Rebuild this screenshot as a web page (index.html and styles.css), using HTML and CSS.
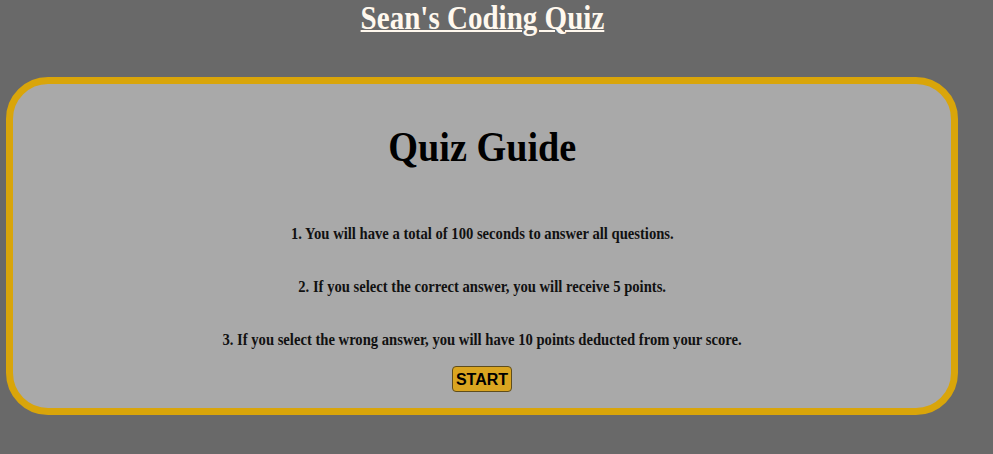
FILE: index.html
```html
<!DOCTYPE html>
<html>
<head>
<meta charset="utf-8">
<link rel="stylesheet" href="styles.css">
</head>
<body>
<div class="page">
  <header class="site-header">
    <h1 class="site-title">Sean's Coding Quiz</h1>
  </header>
  <main class="guide">
    <h2 class="guide-title">Quiz Guide</h2>
    <p class="rule">1. You will have a total of 100 seconds to answer all questions.</p>
    <p class="rule">2. If you select the correct answer, you will receive 5 points.</p>
    <p class="rule">3. If you select the wrong answer, you will have 10 points deducted from your score.</p>
    <button class="start-btn">START</button>
  </main>
</div>
</body>
</html>
```
FILE: styles.css
```css
html, body {
  margin: 0;
  padding: 0;
  background: #696969;
  height: 100%;
}
body {
  font-family: "Liberation Serif", "Times New Roman", serif;
}
.page {
  width: 964px;
  display: flex;
  flex-direction: column;
  align-items: stretch;
}
.site-header {
  display: flex;
  justify-content: center;
  height: 77px;
}
.site-title {
  margin: 0;
  font-size: 33px;
  font-weight: bold;
  color: #fff8ee;
  text-decoration: underline;
  text-decoration-thickness: 2px;
  line-height: 37px;
  transform: scaleX(0.88);
}
.guide {
  margin-left: 6px;
  width: 952px;
  height: 338px;
  box-sizing: border-box;
  background: #a9a9a9;
  border: 7px solid #d9a50a;
  border-radius: 42px;
  display: flex;
  flex-direction: column;
  align-items: center;
}
.guide-title {
  margin: 40px 0 0;
  font-size: 42px;
  line-height: 46px;
  font-weight: bold;
  color: #000;
  transform: scaleX(0.91);
}
.rule {
  margin: 0;
  font-size: 16px;
  font-weight: bold;
  color: #111;
  line-height: 18px;
  transform: scaleX(0.914);
}
.guide-title + .rule {
  margin-top: 55px;
}
.rule + .rule {
  margin-top: 35px;
}
.start-btn {
  margin-top: 17px;
  font-family: "Liberation Sans", Arial, sans-serif;
  font-weight: bold;
  font-size: 16px;
  line-height: 18px;
  background: #daa520;
  color: #000;
  border: 1px solid #5f4d1c;
  border-radius: 4px;
  padding: 4px 3px 2px;
}
```
